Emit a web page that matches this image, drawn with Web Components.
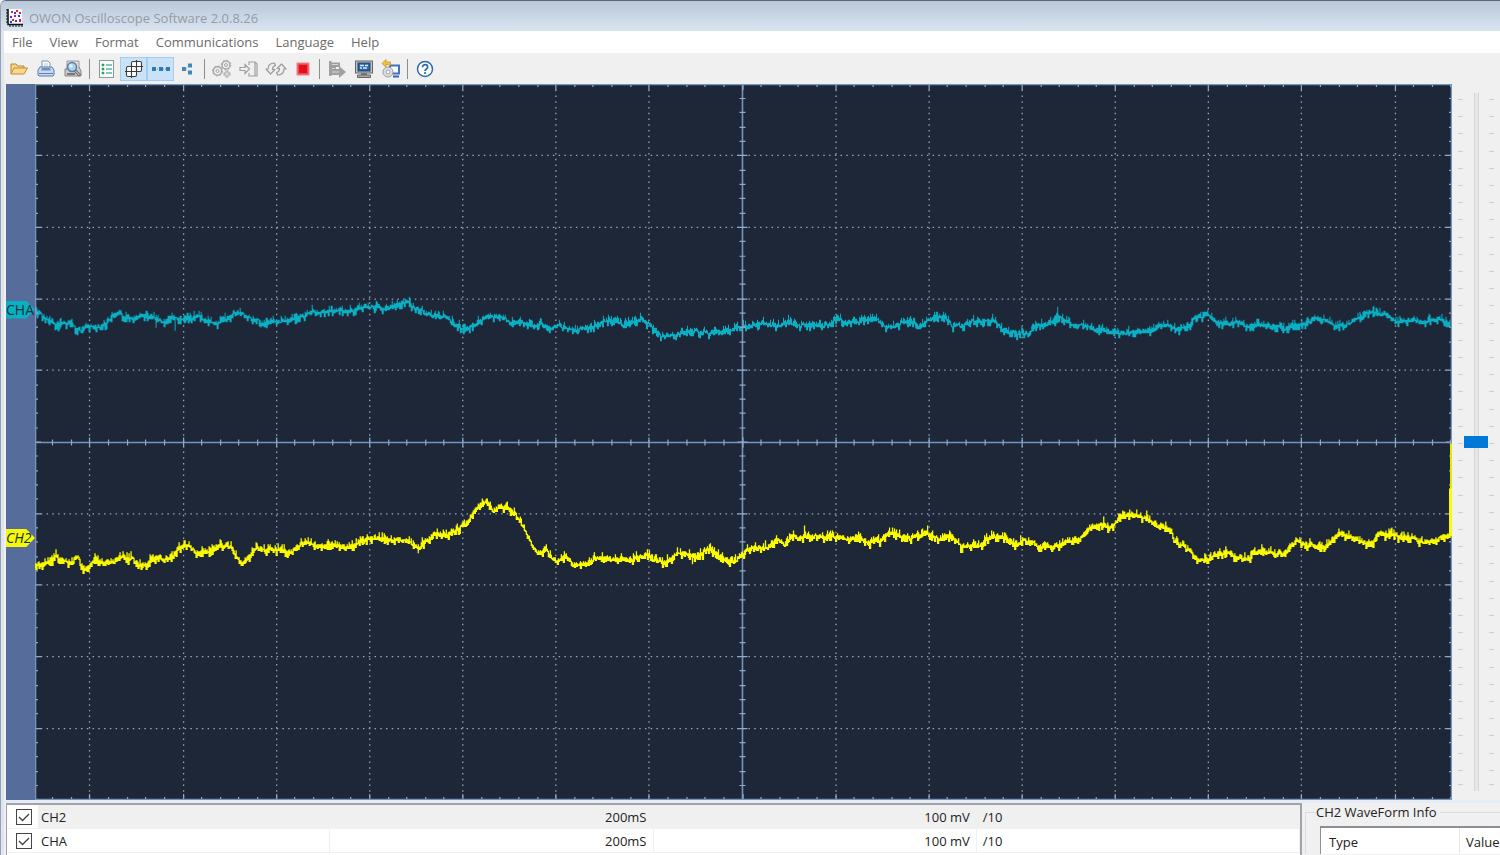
<!DOCTYPE html>
<html lang="en">
<head>
<meta charset="utf-8">
<title>OWON Oscilloscope Software 2.0.8.26</title>
<style>
  body {
    margin: 0;
    background: #f0f0f0;
    font-family: "Open Sans", "Noto Sans", sans-serif;
    font-size: 13px;
    color: #222;
  }
</style>
</head>
<body>
<scope-window>
  <title-bar slot="title">OWON Oscilloscope Software 2.0.8.26</title-bar>
  <menu-bar slot="menu" items="File,View,Format,Communications,Language,Help"></menu-bar>
  <tool-bar slot="tools"></tool-bar>
  <scope-view slot="view">
    <channel-tag slot="tags" style="--y: 31.5%; --tag: #08b0c2">CHA</channel-tag>
    <channel-tag slot="tags" style="--y: 63.4%; --tag: #f6f808; font-style: italic">CH2</channel-tag>
  </scope-view>
  <channel-list slot="list"></channel-list>
  <wave-info slot="info" label="CH2 WaveForm Info"></wave-info>
</scope-window>

<script>
function attach(el, html) {
  const root = el.attachShadow({ mode: "open" });
  root.innerHTML = html;
  return root;
}

class ScopeWindow extends HTMLElement {
  constructor() {
    super();
    attach(this, `
      <style>
        :host {
          display: flex;
          flex-direction: column;
          box-sizing: border-box;
          height: 100vh;
          overflow: hidden;
          border-top: 1px solid #5f666f;
          border-left: 1px solid #9aa1ac;
          border-top-left-radius: 6px;
          background: #dde5f0;
        }
        .client {
          flex: 1;
          min-height: 0;
          display: flex;
          flex-direction: column;
          margin-left: 3px;
          background: #f0f0f0;
        }
        .view {
          flex: 1;
          min-height: 0;
          display: flex;
          padding-left: 2px;
        }
        .bottom {
          display: flex;
          padding: 3px 0 0 2px;
          background: linear-gradient(#e6ecf6 3px, #f0f0f0 3px);
        }
      </style>
      <slot name="title"></slot>
      <div class="client">
        <slot name="menu"></slot>
        <slot name="tools"></slot>
        <div class="view"><slot name="view"></slot></div>
        <div class="bottom"><slot name="list"></slot><slot name="info"></slot></div>
      </div>
    `);
  }
}

class TitleBar extends HTMLElement {
  constructor() {
    super();
    attach(this, `
      <style>
        :host {
          display: flex;
          align-items: center;
          gap: 5px;
          height: 30px;
          padding: 3px 0 0 5px;
          box-sizing: border-box;
          background: linear-gradient(#b9c8d9, #d9e4f0);
          color: #949ba4;
          white-space: nowrap;
        }
        svg { width: 18px; height: 18px; }
      </style>
      <svg viewBox="0 0 18 18">
        <rect x="3" y="0" width="13" height="15" fill="#f6f7fb"/>
        <path d="M2 0V15.500H17" fill="none" stroke="#111" stroke-width="1.500"/>
        <path d="M0 1H2M0 4H2M0 7H2M0 10H2M0 13H2M4 16V18M7 16V18M10 16V18M13 16V18M16 16V18" stroke="#111"/>
        <path d="M5 2h2v2H5zM8 6h2v2H8zM13 3h2v2h-2zM6 10h2v2H6zM13 10h2v3h-2zM10 1h2v2h-2z" fill="#e02035"/>
        <path d="M8 3h2v2H8zM4 7h2v2H4zM12 6h2v2h-2zM9 11h2v2H9zM4 12h2v2H4z" fill="#2a3fe0"/>
      </svg>
      <slot></slot>
    `);
  }
}

class MenuBar extends HTMLElement {
  constructor() {
    super();
    attach(this, `
      <style>
        :host {
          display: flex;
          gap: 1px;
          height: 22px;
          background: #fff;
        }
        button {
          border: 0;
          padding: 0 8px;
          background: none;
          color: #6b6b6b;
          font: inherit;
          line-height: 22px;
        }
      </style>
    `);
  }

  connectedCallback() {
    for (const name of this.getAttribute("items").split(",")) {
      const b = document.createElement("button");
      b.textContent = name;
      this.shadowRoot.append(b);
    }
  }
}

const ICONS = {
  open: `<path d="M1 14V4h5l1.500 2H14v2" fill="#f7d58a" stroke="#b98432"/><path d="M1 14L4 8h13.500L14 14z" fill="#fbd98c" stroke="#c28a32" stroke-linejoin="round"/>`,
  print: `<path d="M5 8V1h6l2 2v5" fill="#fff" stroke="#7b95b8"/><path d="M7 4h4M7 6h4" stroke="#b5c6de"/><path d="M3 7h12l2 3v5l-1 1H2l-1-1v-5z" fill="#c9daf2" stroke="#5879a8"/><path d="M4 10.500h10l-1-2.500H5z" fill="#6f8fbd"/><path d="M2 13.500h14" stroke="#5f83b8"/>`,
  preview: `<path d="M3 1h12v8H3z" fill="#ddd" stroke="#9a9a9a"/><path d="M1 9h3v-3M15 7l2 4v5H1V9" fill="#ccc" stroke="#858585"/><path d="M3 14h8" stroke="#777" stroke-width="2"/><circle cx="8" cy="7" r="4.500" fill="#a9cff5" stroke="#5d7fa6" stroke-width="1.500"/><circle cx="7" cy="6" r="1.800" fill="#e6f3ff"/><path d="M11 10.500l5 5" stroke="#6a6a6a" stroke-width="3"/><path d="M11.500 11l4 4" stroke="#eee"/>`,
  list: `<rect x="1.500" y=".5" width="14" height="17" fill="#f9fcfc" stroke="#8a9a9a"/><path d="M4 4h2v2H4zM4 8h2v2H4zM4 12h2v2H4z" fill="#2ea15c" stroke="#2ea15c" stroke-width=".5"/><path d="M8 5h6M8 9h6M8 13h6" stroke="#66b3a5" stroke-width="1.500"/>`,
  grid: `<g fill="#fff" stroke="#3b3b3b" stroke-width="1.100"><rect x="6.500" y="1.500" width="10" height="10" rx="1.500"/><path d="M11.500 0v12M6 6.500h12"/><rect x="1.500" y="6.500" width="10" height="10" rx="1.500"/><path d="M6.500 5v13M0 11.500h13"/></g>`,
  dots: `<path d="M1 9h16" stroke="#5f9fc9" stroke-dasharray="1 1"/><path d="M0 7h4v4H0zM7 7h4v4H7zM14 7h4v4h-4z" fill="#2f7db0"/>`,
  share: `<path d="M3 7h4v4H3zM9 3.500h4v4H9zM9 10.500h4v4H9z" fill="#4088b5"/><path d="M7 9l2-3M7 9l2 3" stroke="#9dc5dd" stroke-dasharray="1 1"/>`,
  gears: `<g fill="none" stroke="#a6a6a6"><circle cx="4.500" cy="11" r="4.200" stroke-width="1.500"/><circle cx="4.500" cy="11" r="5" stroke-width="1" stroke-dasharray="1.500 2.400"/><circle cx="4.500" cy="11" r="1.500"/><circle cx="13" cy="5" r="4" stroke-width="1.500"/><circle cx="13" cy="5" r="4.900" stroke-width="1" stroke-dasharray="1.500 2.350"/><circle cx="13" cy="5" r="1.500"/><path d="M14 10.500v7M10.500 14h7" stroke-width="3"/></g><path d="M14 11.500v5M11.500 14h5" stroke="#eee"/>`,
  enter: `<g fill="none" stroke="#a0a0a0" stroke-width="1.200"><path d="M0 7.500h5V4.500l4.500 4.500L5 13.500v-3H0zM9 5V2h6l2 2v12H9v-3M15 2v14"/></g>`,
  cycle: `<g fill="#eee" stroke="#9b9b9b" stroke-width="1.200" stroke-linejoin="round"><path d="M7.500 3C3 3 1 5.500 1 9H-1l4.500 5L8 9.500H5.500C5.500 7.500 6.200 6 8.500 5.500z"/><path d="M10.500 15c4.500 0 6.500-2.500 6.500-6h2l-4.500-5L10 8.500h2.500c0 2-.7 3.500-3 4z"/></g>`,
  stop: `<rect x="3" y="3" width="12" height="12" fill="#f04b52" stroke="#e98b90"/><rect x="5" y="5" width="8" height="8" fill="#e3101b"/>`,
  export: `<path d="M1 1h2.500v1.500H12V7H8v2h3V6l7 6-7 6v-3H3.500v1H1z" fill="#a0a0a0"/><path d="M4 4.500h6M4 8.500h3M4 12h7" stroke="#d5d5d5"/>`,
  monitor: `<rect x=".5" y="1" width="17" height="12" fill="#bfc1c5" stroke="#666"/><rect x="3" y="3" width="12" height="8" fill="#2864a4" stroke="#244569"/><path d="M5 5.500h4M10 5.500h3M5 8h2M8 8h4" stroke="#d9ecff" stroke-width="1.500"/><path d="M6 13h6v2H6z" fill="#777"/><path d="M2.500 15h13v2.500h-13z" fill="#aaa" stroke="#666"/>`,
  disc: `<path d="M8 5.500h9v8H8z" fill="#f8fbff" stroke="#3f73b8" stroke-width="2"/><path d="M11 16.500h6" stroke="#3568aa" stroke-width="2"/><circle cx="6" cy="12" r="5" fill="#dedfe2" stroke="#9a9da3"/><circle cx="6" cy="12" r="2" fill="#fff" stroke="#9a9da3"/><path d="M0 3.500L4-.5V2h4.500v3.500H7L6 4.500H4V7z" fill="#f3c33c" stroke="#bf8d19" stroke-width=".7"/>`,
  help: `<circle cx="9" cy="9" r="7.500" fill="#fff" stroke="#2c6ca8" stroke-width="1.500"/><path d="M6.500 7.200C6.500 3.800 11.700 4 11.700 7c0 2-2.700 2-2.700 4" fill="none" stroke="#2c6ca8" stroke-width="1.700"/><circle cx="9" cy="13" r="1.100" fill="#2c6ca8"/>`,
};

class ToolBar extends HTMLElement {
  constructor() {
    super();
    const groups = [
      ["open", "print", "preview"],
      ["list", "grid", "dots", "share"],
      ["gears", "enter", "cycle", "stop"],
      ["export", "monitor", "disc"],
      ["help"],
    ];
    const active = ["grid", "dots"];

    attach(this, `
      <style>
        :host {
          display: flex;
          align-items: center;
          height: 31px;
          padding-left: 1px;
          background: #f0f0f0;
        }
        button {
          display: flex;
          align-items: center;
          justify-content: center;
          box-sizing: border-box;
          width: 27px;
          height: 24px;
          padding: 0;
          border: 1px solid transparent;
          background: none;
        }
        button[aria-pressed="true"] {
          background: #c9e2f7;
          border-color: #a0cff3;
        }
        svg { width: 18px; height: 18px; overflow: visible; }
        hr {
          width: 1px;
          height: 20px;
          margin: 0 3px;
          border: 0;
          background: #8c8c8c;
        }
      </style>
      ${groups.map((g) => g.map((n) => `
        <button aria-label="${n}" aria-pressed="${active.includes(n)}">
          <svg viewBox="0 0 18 18">${ICONS[n]}</svg>
        </button>`).join("")).join("<hr>")}
    `);
  }
}

// left, top, width and height of the graticule
const PLOT = { x: 36, y: 84, w: 1416, h: 717 };
const CENTER = { x: 743, y: 443 };
const DIV = { x: 93.15, y: 71.7 };

const CHA = [
  36,312, 40,313, 46,318, 52,320, 57,327, 63,324, 71,322, 76,328, 81,331, 86,326,
  92,326, 98,328, 106,325, 112,317, 118,313, 124,316, 135,318, 146,315, 156,318,
  165,321, 176,318, 188,317, 200,317, 207,321, 218,324, 228,318, 235,312, 243,313,
  253,318, 258,318, 264,325, 272,321, 282,321, 292,319, 302,317, 308,312, 325,311,
  340,310, 355,311, 365,306, 380,308, 390,308, 400,304, 407,301, 413,306, 425,312,
  436,317, 445,316, 455,323, 464,329, 475,325, 483,319, 492,316, 504,317, 510,322,
  522,323, 535,326, 542,323, 551,329, 557,326, 566,328, 577,331, 588,327, 600,325,
  605,321, 616,319, 623,325, 633,322, 642,320, 650,325, 660,334, 672,336, 681,334,
  690,331, 704,333, 715,333, 726,330, 735,328, 747,326, 755,325, 763,322, 780,326,
  788,321, 800,325, 815,326, 828,325, 836,318, 847,322, 860,321, 870,319, 878,318,
  885,326, 895,326, 905,322, 912,322, 919,326, 928,320, 937,316, 945,318, 953,326,
  965,325, 972,321, 985,320, 995,320, 1002,328, 1012,332, 1020,334, 1030,332,
  1036,326, 1046,324, 1058,318, 1068,321, 1076,327, 1085,325, 1092,329, 1103,330,
  1115,330, 1125,334, 1135,331, 1150,331, 1160,324, 1170,326, 1178,329, 1187,327,
  1195,318, 1207,314, 1217,322, 1230,324, 1238,321, 1248,326, 1262,324, 1275,328,
  1290,327, 1305,323, 1318,318, 1328,320, 1335,327, 1345,325, 1355,320, 1367,314,
  1376,312, 1386,315, 1397,322, 1412,319, 1425,321, 1440,319, 1450,326,
];

const CH2 = [
  36,566, 45,564, 52,563, 57,556, 62,561, 72,562, 79,558, 84,568, 90,568, 96,557,
  104,564, 114,562, 124,558, 133,559, 140,564, 148,565, 153,557, 161,559, 174,557,
  180,549, 190,545, 197,554, 208,552, 222,545, 232,547, 238,558, 243,564, 250,556,
  258,548, 267,550, 280,549, 292,554, 302,544, 312,543, 320,547, 335,545, 350,547,
  362,541, 375,539, 386,538, 392,541, 405,541, 412,543, 420,549, 425,542, 436,533,
  446,534, 456,531, 464,526, 472,516, 482,504, 488,501, 494,511, 500,506, 508,508,
  518,517, 526,531, 533,546, 540,554, 546,550, 552,558, 558,562, 567,557, 573,564,
  585,564, 595,559, 608,560, 618,558, 632,559, 646,555, 660,562, 670,560, 678,553,
  688,554, 694,557, 702,554, 710,549, 720,556, 728,562, 738,560, 744,553, 755,548,
  768,547, 778,541, 785,547, 792,537, 805,537, 820,538, 838,536, 850,540, 858,538,
  868,543, 880,541, 890,533, 900,536, 912,538, 926,534, 938,539, 952,537, 961,547,
  970,547, 980,546, 986,539, 992,536, 1005,538, 1015,544, 1025,541, 1032,542,
  1038,547, 1048,546, 1060,547, 1068,541, 1080,540, 1088,529, 1097,526, 1104,524,
  1109,529, 1116,522, 1122,516, 1135,516, 1146,517, 1155,524, 1165,527, 1171,530,
  1175,543, 1183,545, 1190,552, 1200,560, 1212,559, 1218,553, 1230,554, 1247,559,
  1254,553, 1262,550, 1275,554, 1287,552, 1292,543, 1300,542, 1312,546, 1325,547,
  1332,540, 1338,534, 1350,538, 1360,542, 1372,544, 1378,535, 1390,535, 1402,537,
  1412,538, 1420,543, 1435,541, 1445,536, 1450,535,
];

// follows the samples with a fixed-seed jitter so every load draws the same wave
function tracePath(samples, seed, spikes) {
  let s = seed;
  const rand = () => {
    s = (s * 1664525 + 1013904223) >>> 0;
    return s / 4294967296;
  };
  let d = "";
  let i = 0;
  let drift = 0;
  for (let x = samples[0]; x <= samples[samples.length - 2]; x++) {
    while (i < samples.length - 4 && samples[i + 2] < x) i += 2;
    const t = (x - samples[i]) / (samples[i + 2] - samples[i]);
    const base = samples[i + 1] + (samples[i + 3] - samples[i + 1]) * t;
    if (rand() > 0.6) drift = rand() * 3 - 1.5;
    const tall = rand() > 0.85;
    const top = Math.round(base + drift - (tall ? 5 : rand() * 3));
    const low = Math.round(base + drift + (rand() > 0.85 ? 5 : rand() * 3));
    d += d ? `H${x}V${top}V${low}` : `M${x} ${top}V${low}`;
    if (spikes[x]) d += `V${spikes[x]}V${Math.round(base)}`;
  }
  return d;
}

class ScopeView extends HTMLElement {
  constructor() {
    super();
    const right = PLOT.x + PLOT.w;
    const bottom = PLOT.y + PLOT.h;
    let dotted = "";
    let ticks = "";

    for (let n = -37; n <= 38; n++) {
      const x = Math.floor(CENTER.x + (n * DIV.x) / 5) + 0.5;
      const major = n % 5 === 0;
      const e = major ? 6 : 3;
      const c = major ? 5 : 3;
      if (major && n) dotted += `M${x} ${PLOT.y}V${bottom}`;
      ticks += `M${x} ${PLOT.y}v${e}M${x} ${bottom}v${-e}M${x} ${CENTER.y - c}v${c * 2}`;
    }
    for (let n = -24; n <= 24; n++) {
      const y = Math.round(CENTER.y + (n * DIV.y) / 5) - 0.5;
      const major = n % 5 === 0;
      const e = major ? 6 : 3;
      const c = major ? 5 : 3;
      if (major && n) dotted += `M${PLOT.x} ${y}H${right}`;
      ticks += `M${PLOT.x} ${y}h${e}M${right} ${y}h${-e}M${CENTER.x - c} ${y}h${c * 2}`;
    }

    attach(this, `
      <style>
        :host {
          display: flex;
          flex: 1;
          min-width: 0;
        }
        .strip {
          position: relative;
          width: 29px;
          background: #566d9c;
        }
        .plot {
          flex: 1;
          min-width: 0;
          display: block;
          height: 100%;
          background: #1d2738;
        }
        .dotted { stroke: #95a5ba; stroke-width: 1.300; stroke-dasharray: 1.5 4.25; }
        .ticks { stroke: #8fabcb; stroke-width: 1.200; }
        .axis { stroke: #7795b8; stroke-width: 1.600; }
        path { fill: none; }
      </style>
      <div class="strip"><slot name="tags"></slot></div>
      <svg class="plot" viewBox="${PLOT.x} ${PLOT.y} ${PLOT.w} ${PLOT.h}" preserveAspectRatio="none">
        <path class="dotted" d="${dotted}"/>
        <path d="${tracePath(CHA, 7, { 157: 328, 176: 331, 641: 313, 1058: 307, 1376: 308, 79: 333 })}" stroke="#0bafc3"/>
        <path class="axis" d="M${PLOT.x} ${CENTER.y}H${right}M${CENTER.x} ${PLOT.y}V${bottom}"/>
        <path class="ticks" d="${ticks}"/>
        <path class="axis" d="M${PLOT.x + 0.5} ${PLOT.y + 0.5}H${right - 0.5}V${bottom - 0.5}H${PLOT.x + 0.5}Z"/>
        <path d="${tracePath(CH2, 23, { 57: 550, 221: 540, 419: 554, 693: 565, 805: 526, 890: 528, 928: 526, 1104: 517, 1147: 511, 1392: 528 })}" stroke="#fbfb00" stroke-width="1.300"/>
        <path d="M1451 444V490" stroke="#e6e800" stroke-width="2"/>
        <path d="M1450.500 489V537" stroke="#fbfb00" stroke-width="3"/>
      </svg>
      <level-slider></level-slider>
    `);
  }
}

class ChannelTag extends HTMLElement {
  constructor() {
    super();
    attach(this, `
      <style>
        :host {
          position: absolute;
          left: 0;
          top: var(--y);
          z-index: 1;
          width: 29px;
          height: 18px;
          margin-top: -9px;
          font-size: 14px;
          line-height: 18px;
          color: #10323c;
        }
        :host::before {
          content: "";
          position: absolute;
          inset: 0;
          z-index: -1;
          background: var(--tag);
          clip-path: polygon(0 0, 70% 0, 100% 50%, 70% 100%, 0 100%);
        }
      </style>
      <slot></slot>
    `);
  }
}

class LevelSlider extends HTMLElement {
  constructor() {
    super();
    attach(this, `
      <style>
        :host {
          display: flex;
          justify-content: center;
          gap: 1px;
          width: 48px;
          padding: 9px 0;
          box-sizing: border-box;
          background: #f0f0f0;
        }
        .ticks {
          width: 5px;
          margin: 6px 0;
          border-bottom: 1px solid #cfcfcf;
          background: repeating-linear-gradient(#cfcfcf 0 1px, transparent 1px 17.200px);
        }
        input {
          appearance: none;
          writing-mode: vertical-lr;
          width: 24px;
          height: 100%;
          margin: 0;
          background: linear-gradient(90deg, transparent 10px, #d6d6d6 10px 11px, #e6e8e8 11px 14px, #d6d6d6 14px 15px, transparent 15px);
        }
        input::-webkit-slider-thumb {
          appearance: none;
          width: 24px;
          height: 12px;
          background: #0078d7;
        }
      </style>
      <div class="ticks"></div>
      <input type="range" aria-label="Vertical position" min="-100" max="100" value="0">
      <div class="ticks"></div>
    `);
  }
}

class ChannelList extends HTMLElement {
  constructor() {
    super();
    const rows = [
      ["CH2", "200mS", "100 mV", "/10"],
      ["CHA", "200mS", "100 mV", "/10"],
    ];
    attach(this, `
      <style>
        :host {
          display: block;
          flex: 1;
          border: 1px solid #a0a3aa;
          border-width: 2px 2px 0 1px;
          padding-bottom: 2px;
          background: #fff;
        }
        table {
          width: 100%;
          table-layout: fixed;
          border-collapse: separate;
          border-spacing: 0;
        }
        td {
          height: 22px;
          padding: 1px 6px 0;
          border-right: 1px solid #f0f0f0;
          border-bottom: 1px solid #f0f0f0;
          line-height: 22px;
        }
        td:first-child { padding-left: 0; }
        td:nth-child(2), td:nth-child(3) { text-align: right; }
        tr:first-child td { background: #f0f0f0; }
        tr:first-child td:first-child {
          background: linear-gradient(90deg, #fff 31px, #f0f0f0 31px);
        }
        label {
          display: flex;
          align-items: center;
          gap: 9px;
          padding-left: 9px;
        }
        input {
          appearance: none;
          box-sizing: border-box;
          width: 16px;
          height: 16px;
          margin: 0;
          border: 1px solid #444;
          background: #fff;
        }
        input:checked {
          background: #fff url('data:image/svg+xml,<svg xmlns="http://www.w3.org/2000/svg" viewBox="0 0 14 14"><path d="M2 7l3.500 3.500L12 4" fill="none" stroke="%23444" stroke-width="1.400"/></svg>');
        }
      </style>
      <table>
        ${rows.map(([name, time, volt, probe]) => `
          <tr>
            <td><label><input type="checkbox" checked>${name}</label></td>
            <td>${time}</td><td>${volt}</td><td>${probe}</td>
          </tr>`).join("")}
      </table>
    `);
  }
}

class WaveInfo extends HTMLElement {
  constructor() {
    super();
    attach(this, `
      <style>
        :host {
          display: block;
          width: 198px;
          height: 51px;
          box-sizing: border-box;
          overflow: hidden;
        }
        fieldset {
          min-width: 0;
          margin: 0 0 0 3px;
          padding: 5px 0 0 14px;
          border: 1px solid #dcdcdc;
          border-width: 1px 0 0 1px;
        }
        legend {
          margin-left: -4px;
          padding: 0 3px 0 0;
          line-height: 18px;
        }
        table {
          width: 100%;
          table-layout: fixed;
          border: 2px solid #8a8f98;
          border-width: 2px 0 0 1px;
          border-spacing: 0;
          background: #fff;
        }
        th {
          height: 28px;
          padding: 0 0 0 6px;
          font-weight: normal;
          line-height: 28px;
          text-align: left;
        }
        th:first-child {
          width: 130px;
          padding-left: 8px;
          border-right: 1px solid #e5e5e5;
        }
      </style>
      <fieldset>
        <legend></legend>
        <table><tr><th>Type</th><th>Value</th></tr></table>
      </fieldset>
    `);
  }

  connectedCallback() {
    this.shadowRoot.querySelector("legend").textContent = this.getAttribute("label");
  }
}

customElements.define("scope-window", ScopeWindow);
customElements.define("title-bar", TitleBar);
customElements.define("menu-bar", MenuBar);
customElements.define("tool-bar", ToolBar);
customElements.define("level-slider", LevelSlider);
customElements.define("channel-tag", ChannelTag);
customElements.define("scope-view", ScopeView);
customElements.define("channel-list", ChannelList);
customElements.define("wave-info", WaveInfo);
</script>
</body>
</html>
